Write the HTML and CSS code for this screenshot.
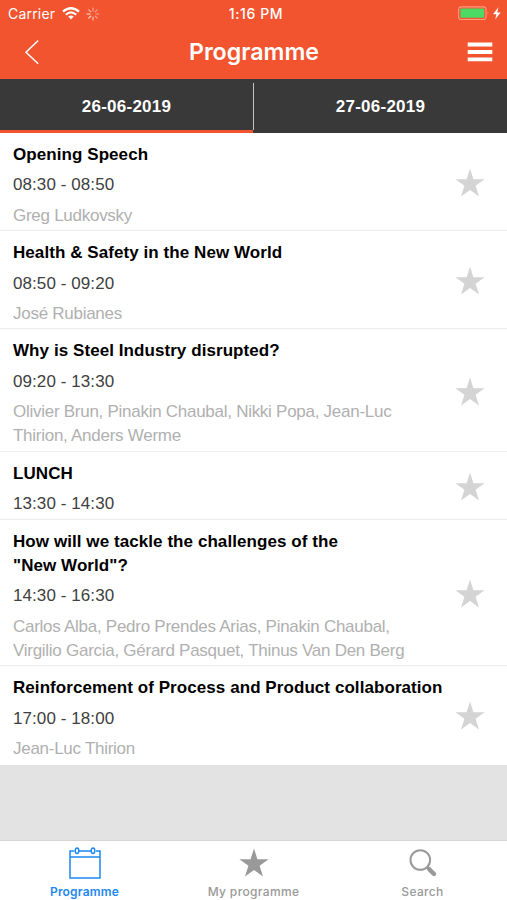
FILE: index.html
```html
<!DOCTYPE html>
<html lang="en">
<head>
<meta charset="utf-8">
<title>Programme</title>
<link rel="stylesheet" href="styles.css">
</head>
<body>
<svg class="defs" width="0" height="0" aria-hidden="true">
  <symbol id="star" viewBox="0 0 30 30"><path d="M15 .5 18.4 11.2H29.6L20.6 17.8 24 28.6 15 22 6 28.6 9.4 17.8.4 11.2H11.6Z"/></symbol>
</svg>
<div class="app">
  <header class="header">
    <div class="status">
      <div class="status-left">
        <span class="carrier">Carrier</span>
        <svg class="wifi" width="18" height="13" viewBox="0 0 18 13" fill="none" stroke="#fff" stroke-width="2.2"><path d="M1 4.7Q9-2.2 17 4.7M3.8 7.7Q9 3.1 14.2 7.7"/><path d="M9 12.5 6.2 9.6Q9 7.4 11.8 9.6Z" fill="#fff" stroke="none"/></svg>
        <svg class="spinner" width="14" height="14" viewBox="0 0 14 14" stroke="#fff" stroke-width="1.2" stroke-linecap="round"><path d="M7 1v3" opacity=".5"/><path d="m11.2 2.8-2 2" opacity=".45"/><path d="M13 7h-3" opacity=".45"/><path d="m11.2 11.2-2-2" opacity=".5"/><path d="M7 13v-3" opacity=".65"/><path d="m2.8 11.2 2-2" opacity=".8"/><path d="M1 7h3" opacity=".85"/><path d="m2.8 2.8 2 2" opacity=".6"/></svg>
      </div>
      <span class="clock">1:16 PM</span>
      <div class="status-right">
        <svg width="44" height="15" viewBox="0 0 44 15"><rect x=".6" y=".9" width="27.4" height="12.6" rx="2.8" fill="none" stroke="#ff9b80" stroke-width="1.1"/><rect x="2.4" y="2.6" width="23.8" height="9.2" rx="1.2" fill="#4cd964"/><path d="M29.6 5q1.8 2.2 0 4.4Z" fill="#ff9b80"/><path d="M40.4 1.2 35 8.2H38.4L37.2 13.6 42.6 6.4H39.2Z" fill="#fff"/></svg>
      </div>
    </div>
    <div class="navbar">
      <svg width="16" height="26" viewBox="0 0 16 26" fill="none" stroke="#fff" stroke-width="1.5"><path d="M14.2 1.5 2 13.2 14.2 24.8"/></svg>
      <h1 class="title">Programme</h1>
      <svg width="26" height="20" viewBox="0 0 26 20" fill="#fff"><path d="M.7.6h24.6v3.9H.7zM.7 8h24.6v3.9H.7zM.7 15.4h24.6v3.9H.7z"/></svg>
    </div>
  </header>
  <nav class="days">
    <div class="day day-active">26-06-2019</div>
    <div class="divider"></div>
    <div class="day">27-06-2019</div>
  </nav>
  <main class="sessions">
    <article class="session">
      <div class="info"><h2 class="name">Opening Speech</h2><p class="time">08:30 - 08:50</p><p class="speakers">Greg Ludkovsky</p></div>
      <svg class="star"><use href="#star"/></svg>
    </article>
    <article class="session">
      <div class="info"><h2 class="name">Health &amp; Safety in the New World</h2><p class="time">08:50 - 09:20</p><p class="speakers">José Rubianes</p></div>
      <svg class="star"><use href="#star"/></svg>
    </article>
    <article class="session">
      <div class="info"><h2 class="name">Why is Steel Industry disrupted?</h2><p class="time">09:20 - 13:30</p><p class="speakers">Olivier Brun, Pinakin Chaubal, Nikki Popa, Jean-Luc<br>Thirion, Anders Werme</p></div>
      <svg class="star"><use href="#star"/></svg>
    </article>
    <article class="session">
      <div class="info"><h2 class="name">LUNCH</h2><p class="time">13:30 - 14:30</p></div>
      <svg class="star"><use href="#star"/></svg>
    </article>
    <article class="session">
      <div class="info"><h2 class="name">How will we tackle the challenges of the<br>"New World"?</h2><p class="time">14:30 - 16:30</p><p class="speakers">Carlos Alba, Pedro Prendes Arias, Pinakin Chaubal,<br>Virgilio Garcia, Gérard Pasquet, Thinus Van Den Berg</p></div>
      <svg class="star"><use href="#star"/></svg>
    </article>
    <article class="session">
      <div class="info"><h2 class="name">Reinforcement of Process and Product collaboration</h2><p class="time">17:00 - 18:00</p><p class="speakers">Jean-Luc Thirion</p></div>
      <svg class="star"><use href="#star"/></svg>
    </article>
  </main>
  <footer class="tabbar">
    <div class="tab tab-active">
      <svg width="34" height="34" viewBox="0 0 34 34" fill="none" stroke="currentColor" stroke-width="1.5"><path d="M6 5H2V32H32V5H28M11 5H23M2 11H32"/><ellipse cx="9" cy="4.7" rx="1.8" ry="2.7"/><ellipse cx="25" cy="4.7" rx="1.8" ry="2.7"/></svg>
      <span>Programme</span>
    </div>
    <div class="tab">
      <svg class="tab-star" width="30" height="34" viewBox="0 0 30 34"><use href="#star" y="2" width="30" height="30"/></svg>
      <span>My programme</span>
    </div>
    <div class="tab">
      <svg width="30" height="34" viewBox="0 0 30 34" fill="none" stroke="currentColor"><circle cx="12.3" cy="14" r="9.8" stroke-width="2"/><path d="m19 20.8 2.2 2.2" stroke-width="2.6"/><path d="m21.2 23.2 4.8 4.8" stroke-width="4.4" stroke-linecap="round"/></svg>
      <span>Search</span>
    </div>
  </footer>
</div>
</body>
</html>
```
FILE: styles.css
```css
* { box-sizing: border-box; }
body { margin: 0; font-family: "Liberation Sans", Arial, sans-serif; }
h1, h2, p { margin: 0; }
svg { display: block; flex: none; }
.defs { position: absolute; }
.app { width: 507px; height: 900px; display: flex; flex-direction: column; background: #e3e3e3; overflow: hidden; white-space: nowrap; }
.header { height: 79px; background: #f25430; color: #fff; font-family: Inter, sans-serif; }
.status { height: 27px; padding: 0 5px 0 8px; display: grid; grid-template-columns: 1fr auto 1fr; align-items: center; font-size: 14px; }
.status-left { display: flex; align-items: center; }
.carrier { width: 54px; letter-spacing: .2px; }
.spinner { margin-left: 6px; }
.clock { font-weight: 500; font-size: 14px; letter-spacing: .6px; padding-left: 2px; }
.status-right { display: flex; justify-content: flex-end; }
.navbar { height: 50px; padding: 0 14px 0 24px; display: grid; grid-template-columns: 17px 1fr 26px; align-items: center; }
.title { font-size: 23.2px; font-weight: 600; text-align: center; padding-bottom: 1px; }
.days { height: 54px; display: flex; background: #393939; color: #fff; font-size: 17px; letter-spacing: .25px; font-weight: 700; }
.day { flex: 1; display: flex; align-items: center; justify-content: center; border-bottom: 3px solid transparent; border-top: 4px solid transparent; }
.day-active { border-bottom-color: #f25430; }
.divider { width: 1px; margin: 4px 0 3px; background: #c4c4c4; }
.session { display: flex; align-items: center; padding: 10px 22px 2px 13px; border-bottom: 1px solid #ededed; background: #fff; }
.info { flex: 1; font-size: 17px; line-height: 24.37px; }
.name { font-size: inherit; letter-spacing: .07px; }
.time, .speakers { margin-top: 6px; }
.time { color: #404040; letter-spacing: .08px; }
.speakers { color: #b0b0b0; letter-spacing: -.27px; }
.session:last-child { border-bottom-color: #fff; }
.star { width: 30px; height: 30px; margin-top: -5px; fill: #d4d4d4; }
.tabbar { height: 60px; margin-top: auto; padding-top: 5px; display: grid; grid-template-columns: repeat(3, 1fr); background: #fff; border-top: 1px solid #d4d4d4; }
.tab { display: flex; flex-direction: column; align-items: center; color: #999; font: 500 12px/16px Inter, sans-serif; letter-spacing: .35px; gap: 4px; }
.tab-active { color: #1e88f2; font-weight: 600; letter-spacing: .2px; }
.tab-star { fill: currentColor; }
```
